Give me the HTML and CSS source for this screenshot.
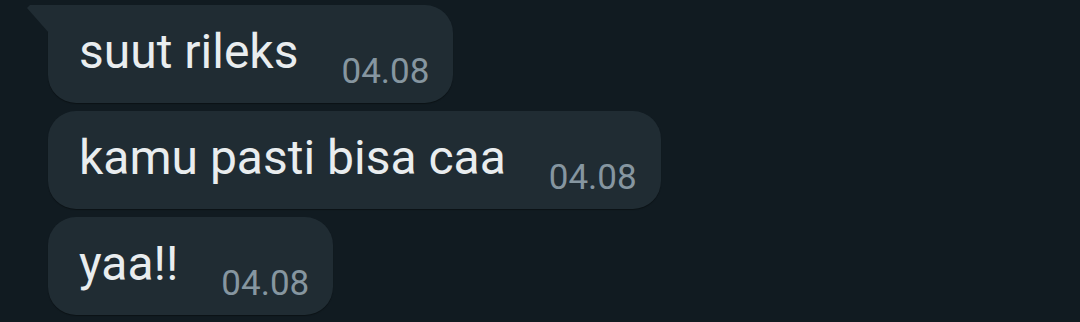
FILE: index.html
```html
<!DOCTYPE html>
<html>
<head>
<meta charset="utf-8">
<link rel="stylesheet" href="styles.css">
</head>
<body>
<div class="chat">
  <div class="bubble first">
    <span class="text">suut rileks</span>
    <span class="time">04.08</span>
  </div>
  <div class="bubble">
    <span class="text">kamu pasti bisa caa</span>
    <span class="time">04.08</span>
  </div>
  <div class="bubble">
    <span class="text">yaa!!</span>
    <span class="time">04.08</span>
  </div>
</div>
</body>
</html>
```

FILE: styles.css
```css
html, body {
  margin: 0;
  padding: 0;
  background: #111b21;
  height: 100%;
  overflow: hidden;
}
.chat {
  display: flex;
  flex-direction: column;
  align-items: flex-start;
  gap: 8px;
  padding: 5px 0 0 48px;
  font-family: Roboto, "Noto Sans", sans-serif;
}
.bubble {
  position: relative;
  display: flex;
  align-items: flex-end;
  gap: 43px;
  background: #202c33;
  border-radius: 28px;
  padding: 19px 24px 13px 31px;
  height: 98px;
  box-sizing: border-box;
  box-shadow: 0 1px 1px rgba(0,0,0,0.35);
}
.bubble.first {
  border-top-left-radius: 0;
}
.bubble.first::before {
  content: "";
  position: absolute;
  left: -21px;
  top: 0;
  width: 22px;
  height: 28px;
  background: #202c33;
  clip-path: polygon(0 3px, 3px 0, 100% 0, 100% 100%);
}
.text {
  color: #e9edef;
  font-size: 48px;
  line-height: 56px;
  align-self: flex-start;
}
.time {
  color: #8696a0;
  font-size: 35px;
  line-height: 36px;
}
```
